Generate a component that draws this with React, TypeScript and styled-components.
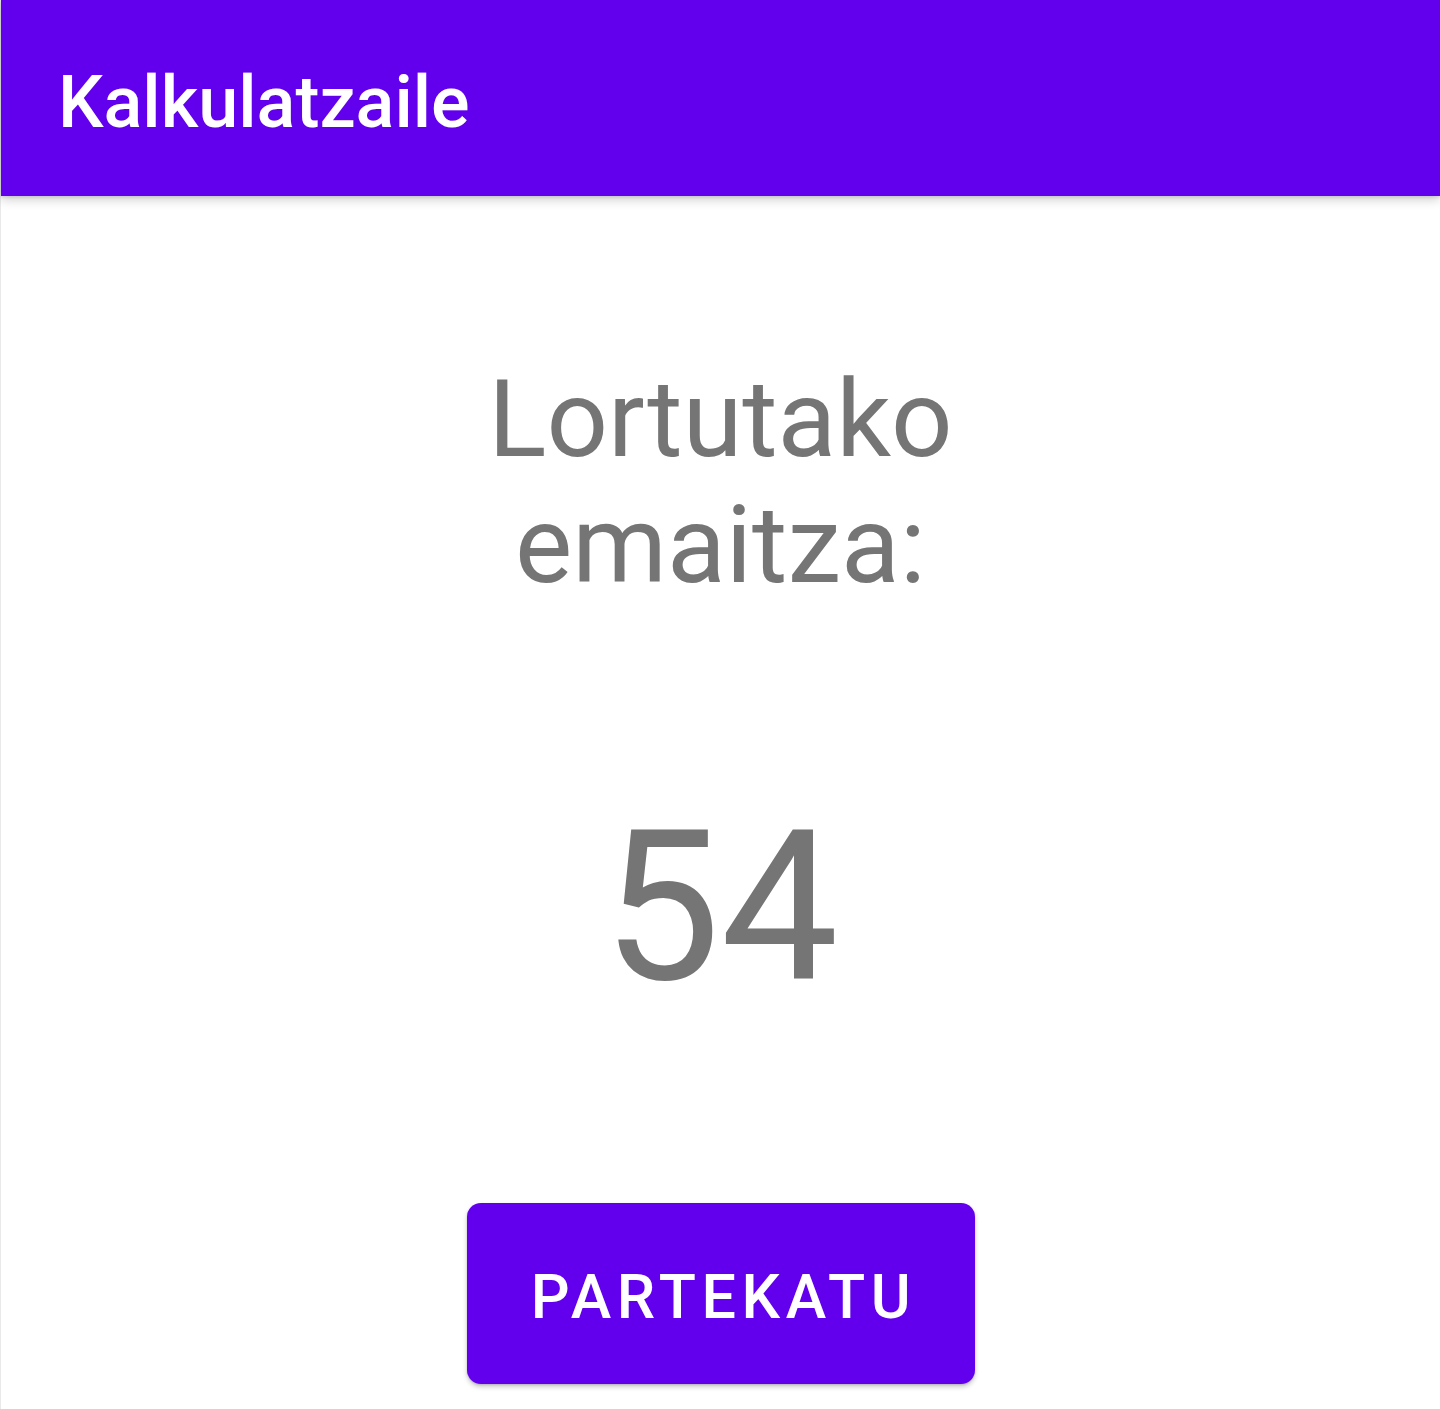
import React from "react";
import styled, { createGlobalStyle } from "styled-components";

const GlobalStyle = createGlobalStyle`
  html, body {
    margin: 0;
    padding: 0;
    background: #ffffff;
  }
  body {
    font-family: Roboto, "Noto Sans", Arial, sans-serif;
    -webkit-font-smoothing: antialiased;
  }
`;

const Screen = styled.div`
  box-sizing: border-box;
  width: 1440px;
  min-height: 1409px;
  border-left: 1px solid #e9e9e9;
  display: flex;
  flex-direction: column;
  align-items: stretch;
  background: #ffffff;
`;

const AppBar = styled.header`
  box-sizing: border-box;
  height: 196px;
  background: #6200ee;
  display: flex;
  align-items: center;
  padding: 8px 0 0 57px;
  box-shadow: 0 4px 10px rgba(0, 0, 0, 0.18), 0 1px 3px rgba(0, 0, 0, 0.12);
  position: relative;
  z-index: 1;
`;

const Title = styled.h1`
  margin: 0;
  font-family: Roboto, "Noto Sans", sans-serif;
  font-weight: 500;
  font-size: 72px;
  line-height: normal;
  color: #ffffff;
`;

const Content = styled.main`
  display: flex;
  flex-direction: column;
  align-items: center;
`;

const Label = styled.p`
  margin: 160px 0 0;
  font-family: Roboto, "Noto Sans", sans-serif;
  font-weight: 400;
  font-size: 108px;
  line-height: normal;
  color: #757575;
  text-align: center;
  width: 560px;
`;

const Result = styled.p`
  margin: 176px 0 0;
  font-family: Roboto, "Noto Sans", sans-serif;
  font-weight: 400;
  font-size: 210px;
  line-height: normal;
  color: #757575;
  text-align: center;
`;

const ShareButton = styled.button`
  box-sizing: border-box;
  margin-top: 173px;
  width: 508px;
  height: 181px;
  border: none;
  border-radius: 14px;
  background: #6200ee;
  color: #ffffff;
  font-family: Roboto, "Noto Sans", sans-serif;
  font-weight: 500;
  font-size: 61px;
  letter-spacing: 0.092em;
  text-transform: uppercase;
  padding: 6px 0 0 0.1em;
  box-shadow: 0 3px 5px rgba(0, 0, 0, 0.2), 0 1px 2px rgba(0, 0, 0, 0.14);
  cursor: pointer;
`;

export default function App() {
  return (
    <>
      <GlobalStyle />
      <Screen>
        <AppBar>
          <Title>Kalkulatzaile</Title>
        </AppBar>
        <Content>
          <Label>Lortutako emaitza:</Label>
          <Result>54</Result>
          <ShareButton>Partekatu</ShareButton>
        </Content>
      </Screen>
    </>
  );
}
